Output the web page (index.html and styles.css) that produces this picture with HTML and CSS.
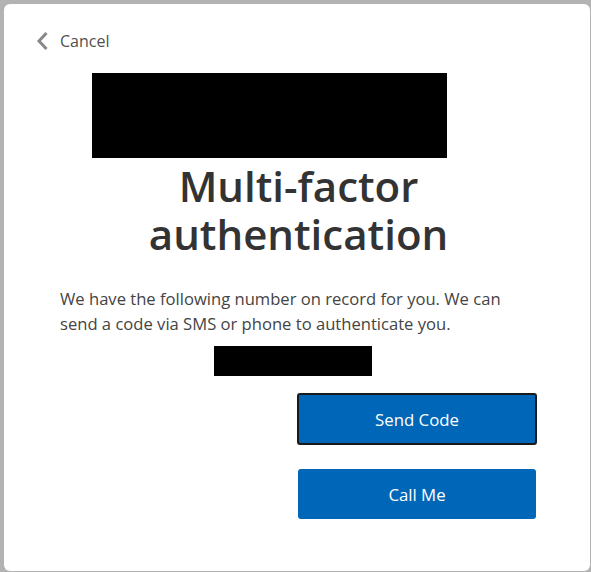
FILE: index.html
```html
<!DOCTYPE html>
<html lang="en">
<head>
  <meta charset="UTF-8">
  <title>Multi-factor authentication</title>
  <link rel="stylesheet" href="styles.css">
</head>
<body>

<div class="card">
  <a class="cancel" href="#">
    <svg class="chevron" width="12" height="20" viewBox="0 0 12 20">
      <path d="M10.5 2 L3 10 L10.5 18" fill="none" stroke="#888" stroke-width="3"/>
    </svg>
    <span>Cancel</span>
  </a>

  <div class="content">
    <div class="redact logo"></div>
    <h1>Multi-factor authentication</h1>
    <p>We have the following number on record for you. We can send a code via SMS or phone to authenticate you.</p>
    <div class="redact phone"></div>

    <div class="actions">
      <button class="btn focused">Send Code</button>
      <button class="btn">Call Me</button>
    </div>
  </div>
</div>

</body>
</html>
```

FILE: styles.css
```css
* {
  box-sizing: border-box;
}

html, body {
  height: 100%;
  margin: 0;
}

body {
  background: #b3b3b3;
  padding: 4px 1px 1px 4px;
  font-family: "Open Sans", "Noto Sans", sans-serif;
  color: #333;
}

.card {
  height: 100%;
  background: #fff;
  border-radius: 6px;
  padding: 25px 53px 0 32px;
}

.cancel {
  display: flex;
  align-items: center;
  gap: 12px;
  color: #505050;
  text-decoration: none;
  font-size: 16px;
  line-height: 24px;
}

.content {
  padding-left: 24px;
}

.redact {
  background: #000;
}

.logo {
  width: 355px;
  height: 85px;
  margin: 20px 0 0 32px;
}

h1 {
  margin: 4px 0 0;
  font-size: 42px;
  line-height: 48px;
  font-weight: 600;
  text-align: center;
  color: #333;
}

p {
  margin: 28px 0 0;
  max-width: 460px;
  font-size: 16.6px;
  line-height: 25px;
  color: #444;
}

.phone {
  width: 158px;
  height: 30px;
  margin: 10px 0 0 154px;
}

.actions {
  display: flex;
  flex-direction: column;
  align-items: flex-end;
  gap: 24px;
  margin-top: 17px;
}

.btn {
  width: 240px;
  height: 52px;
  border: none;
  border-radius: 3px;
  background: #0067b8;
  color: #fff;
  font-family: inherit;
  font-size: 16.8px;
}

.btn.focused {
  border: 2px solid #1a1a1a;
}

.btn:not(.focused) {
  width: 238px;
  height: 50px;
  margin-right: 1px;
}
```
